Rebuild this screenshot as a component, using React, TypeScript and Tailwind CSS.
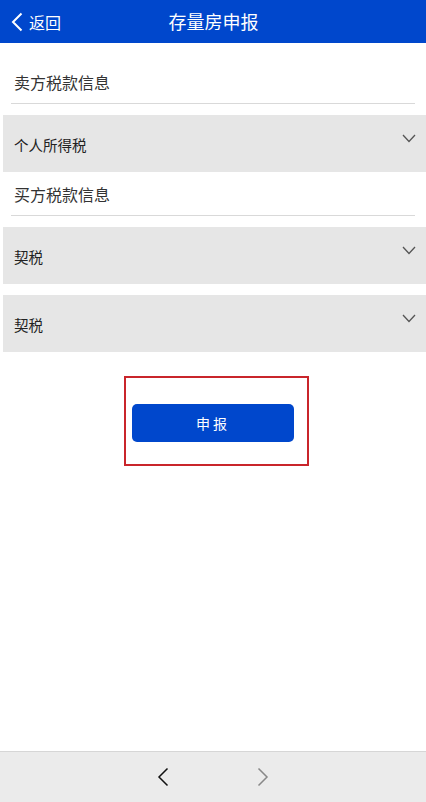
const font = { fontFamily: '"Noto Sans CJK SC", "Noto Sans", sans-serif' }

function SectionTitle({ title, first }: { title: string; first?: boolean }) {
  return (
    <div className={`${first ? 'mt-[17px]' : ''} mx-[11px] h-[44px] flex items-center border-b border-[#d9d9d9] pl-[3px]`}>
      <span className="text-[16px] text-[#333]">{title}</span>
    </div>
  )
}

function TaxPanel({ label }: { label: string }) {
  return (
    <div className="mt-[11px] ml-[3px] h-[57px] bg-[#e6e6e6] flex items-center pl-[11px] relative">
      <span className="text-[14.5px] text-[#222] pt-[3px]">{label}</span>
      {/* chevron sits near the top, not centered */}
      <svg className="absolute right-[10px] top-[19px]" width="14" height="9" viewBox="0 0 14 9" fill="none">
        <polyline points="1,1 7,7.5 13,1" stroke="#555" strokeWidth="1.3" />
      </svg>
    </div>
  )
}

export default function App() {
  return (
    <div className="min-h-[802px] flex flex-col bg-white" style={font}>
      <header className="h-[43px] bg-[#0047cc] flex items-center relative text-white">
        <div className="flex items-center pl-[11px] gap-[6px]">
          <svg width="12" height="20" viewBox="0 0 12 20" fill="none">
            <polyline points="10.5,1.5 2,10 10.5,18.5" stroke="white" strokeWidth="2" />
          </svg>
          <span className="text-[16px]">返回</span>
        </div>
        <h1 className="absolute left-0 right-0 text-center text-[18px] pointer-events-none pl-[1px]">存量房申报</h1>
      </header>

      <SectionTitle title="卖方税款信息" first />
      <TaxPanel label="个人所得税" />
      <SectionTitle title="买方税款信息" />
      <TaxPanel label="契税" />
      <TaxPanel label="契税" />

      <div className="mt-[24px] ml-[124px] w-[185px] h-[90px] border-2 border-[#c9252b] pl-[6px] pt-[26px]">
        <button className="w-[162px] h-[38px] rounded-[5px] bg-[#0047cc] text-white text-[14px] tracking-[3px]">
          申报
        </button>
      </div>

      <footer className="mt-auto h-[51px] bg-[#ebebeb] border-t border-[#d6d6d6] flex items-center justify-center gap-[88px]">
        <svg width="12" height="20" viewBox="0 0 12 20" fill="none">
          <polyline points="10.5,1.5 2,10 10.5,18.5" stroke="#111" strokeWidth="1.5" />
        </svg>
        <svg width="12" height="20" viewBox="0 0 12 20" fill="none">
          <polyline points="1.5,1.5 10,10 1.5,18.5" stroke="#888" strokeWidth="1.5" />
        </svg>
      </footer>
    </div>
  )
}
